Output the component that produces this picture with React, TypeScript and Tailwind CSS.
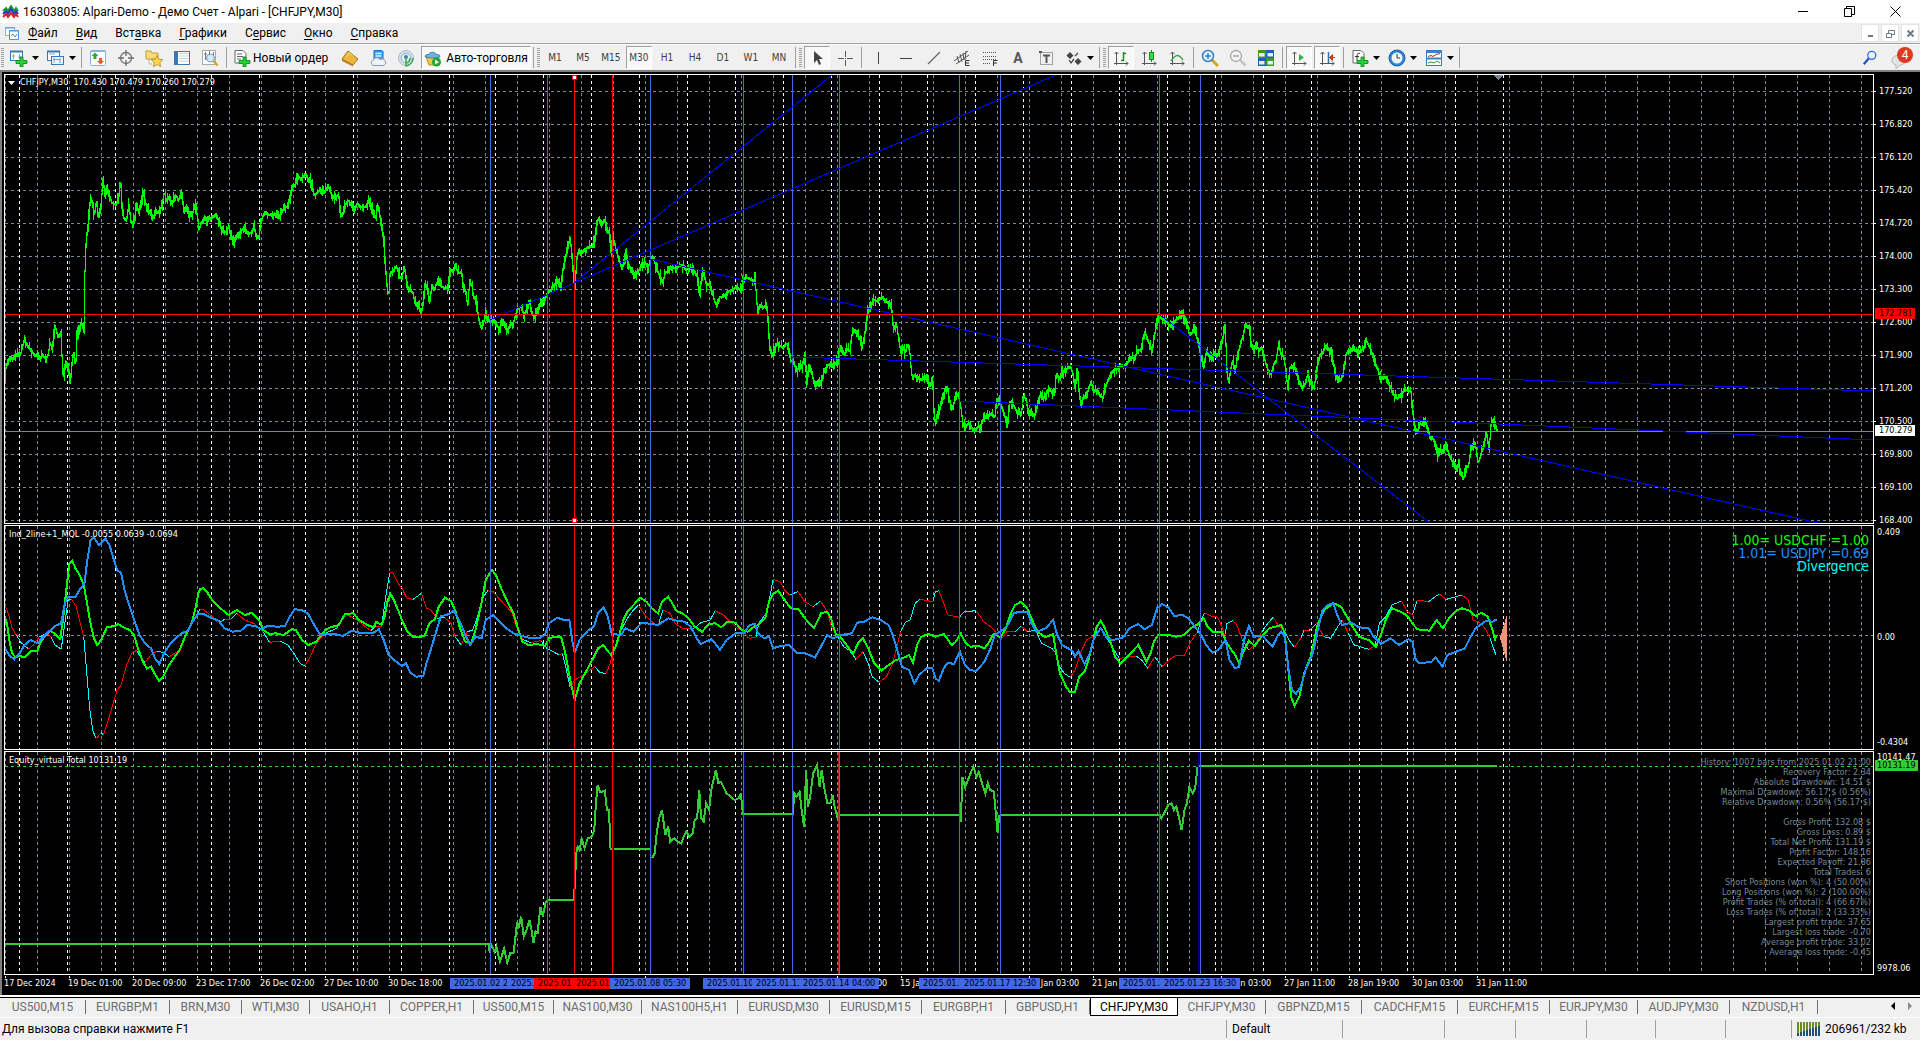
import type { ReactNode } from "react";

type Point = [number, number];
type Chunk = { x: number; k: number; y: number; d: string };

// Every chunk stores raw "x,y" samples: k samples per pixel across, 3 per pixel down.
function unpack(chunks: Chunk[]): Point[] {
  return chunks.flatMap(({ x, k, y, d }) =>
    d.split(" ").map((pair): Point => {
      const [a, b] = pair.split(",").map(Number);
      return [x + a / k, y + b / 3];
    })
  );
}

function toPath(points: Point[]) {
  return "M" + points.map(([x, y]) => `${x.toFixed(1)} ${y.toFixed(1)}`).join("L");
}

const price = unpack([
  {
    x: 0, k: 2.45, y: 70,
    d: "12,925 15,890 22,868 34,866 42,852 50,856 55,830 60,808 66,825 75,840 84,855 92,858 98,866 104,856 112,866 118,855 123,820 128,835 133,785 136,772 142,800 147,798 150,790 152,860 156,925 160,875 166,880 172,940 177,870 181,848 186,880 189,785 194,790 199,755 206,785 208,610 211,520 217,450 222,385 227,400 231,440 237,390 241,450 246,420 250,370 253,315 256,372 262,362 268,375 275,400 285,402 291,385 295,325 299,400 304,445 310,450 316,405 321,455 325,460 331,440 335,400 340,430 346,395 351,365 357,400 363,420 370,435 376,445 383,425 390,430 397,405 403,365 408,395 414,380 420,405 426,385 433,380 438,390 444,368 448,400 451,425 458,420 466,440 472,430 478,405 484,440 488,480 493,460 500,445 508,450 516,445 524,440 530,432 536,455 542,475 548,490 554,485 560,470 566,495 574,518 580,500 586,500 593,480 600,470 606,490 613,490 618,490 622,465 628,500 634,505 638,465 644,440 650,425 658,435 668,435 676,435 683,445 690,425 697,412 705,410 712,375 718,348 724,345 730,318 737,328 745,318 750,312 756,335 760,325 765,350 770,375 778,368 786,358 794,370 800,355 808,355 814,385 822,378 830,375 836,445 842,425 848,400 854,392 860,405 868,420 876,400 882,410 890,412 898,410 905,385 910,405 916,435 921,445 925,400 930,430 935,475 940,500 944,580 948,640 952,685 956,610 962,605 970,590 976,600 980,620 985,628 990,590 995,620 1000,660 1006,660 1012,670 1018,705 1024,700 1028,710 1032,735 1037,695 1042,640 1047,655 1053,695 1058,645 1064,660 1070,640 1075,630 1082,650 1090,655 1098,650 1104,600 1110,605 1115,588 1120,600 1124,610 1131,605 1136,655 1141,665 1146,710 1150,645 1156,645 1160,680 1166,685 1170,720 1175,760 1180,775 1185,760 1190,725 1195,750 1201,755 1210,750 1217,765 1224,780 1230,755 1237,765 1242,785 1250,765 1257,765 1262,740 1268,715 1276,710 1284,735 1290,720 1297,695 1303,725 1309,745 1316,725 1324,700 1330,695 1336,680 1342,670 1350,660 1358,645 1366,635 1375,660 1380,590 1386,560 1391,535 1397,500 1402,570 1408,665 1413,570 1418,540 1424,545 1430,545 1438,535 1446,530 1454,530 1460,480 1466,445 1472,455 1479,455 1483,450 1488,490 1493,485 1497,550 1501,500 1506,520 1512,550 1518,575 1524,595 1530,575 1534,540 1539,580 1547,605 1556,620 1564,600",
  },
  {
    x: 600, k: 2.45, y: 70,
    d: "97,600 104,580 112,580 118,595 124,570 130,560 136,585 142,605 148,620 154,640 160,605 168,605 176,590 184,595 192,590 200,585 208,595 216,595 224,595 232,605 238,620 245,670 250,610 256,620 262,645 269,640 275,665 281,695 287,705 294,680 302,680 310,670 318,662 326,658 334,650 344,660 350,635 358,625 366,625 374,635 380,625 384,690 387,730 392,705 398,710 404,710 408,695 412,760 417,840 422,855 427,835 434,822 442,828 450,832 457,820 462,830 467,875 472,870 478,890 484,905 488,880 494,900 502,850 507,945 511,885 517,900 523,930 530,950 536,930 542,940 549,905 557,885 564,885 570,885 577,880 583,870 588,830 594,850 600,850 606,835 612,845 618,790 623,780 630,795 637,805 642,830 648,800 653,750 658,715 664,705 671,690 680,693 688,685 695,685 702,695 709,700 714,705 718,760 722,780 727,765 732,810 738,850 743,830 748,850 753,825 758,830 762,890 765,920 772,915 780,925 788,930 796,920 803,935 810,945 815,920 819,1045 823,1060 828,1030 834,1010 840,980 846,960 851,950 856,990 863,1015 870,990 877,970 884,1010 890,1065 896,1070 904,1060 912,1075 920,1080 926,1070 933,1070 938,1050 945,1040 952,1040 960,1030 967,1045 973,985 980,1000 987,1020 993,1045 998,1075 1003,995 1010,1000 1017,1015 1024,1030 1032,1035 1038,975 1044,990 1052,1040 1058,1025 1065,1040 1072,1005 1080,970 1087,985 1094,970 1101,955 1108,970 1114,975 1118,905 1125,930 1132,905 1140,905 1147,890 1155,895 1160,920 1165,960 1169,890 1174,970 1179,1010 1184,980 1190,985 1196,960 1203,935 1210,965 1217,960 1225,975 1232,985 1238,955 1245,930 1252,912 1260,900 1270,895 1278,885 1287,890 1294,875 1302,860 1310,870 1317,840 1325,840 1331,800 1336,790 1342,810 1348,825 1352,850 1358,800 1364,760 1370,740 1378,742 1386,750 1394,765 1402,765 1410,750 1418,745 1423,735 1427,720 1431,745 1437,750 1443,790 1450,790 1456,775 1462,800 1468,830 1474,870 1480,880 1486,845 1493,855 1500,870 1507,850 1514,855 1521,825 1527,800 1532,760 1535,880 1540,945 1545,900 1550,870 1556,910 1562,860 1567,830",
  },
  {
    x: 1200, k: 2.175, y: 70,
    d: "90,815 95,790 99,760 104,775 108,765 111,825 117,840 123,815 128,845 134,830 138,850 143,880 148,900 154,915 160,885 166,870 171,820 176,850 182,860 187,900 191,960 196,890 202,890 208,900 214,930 222,955 229,940 235,910 241,940 248,955 255,895 260,855 266,850 272,835 280,835 287,855 293,900 300,935 306,930 312,910 318,850 326,845 334,840 342,845 350,845 356,835 361,810 367,825 373,845 380,880 387,900 393,930 400,920 407,925 414,950 421,975 428,985 436,980 442,965 450,960 459,965 463,1020 467,1065 472,1090 478,1060 484,1065 488,1045 494,1070 500,1100 506,1105 512,1120 518,1160 524,1140 530,1150 534,1120 540,1145 547,1170 553,1180 558,1190 563,1185 568,1210 573,1230 578,1190 584,1190 590,1130 595,1120 600,1130 605,1180 610,1160 616,1130 623,1090 629,1140 633,1065 638,1050 643,1070 646,1080",
  },
]);

const chfLine = unpack([
  {
    x: 0, k: 2.45, y: 520,
    d: "12,292 18,315 24,370 30,400 38,412 48,408 60,412 75,393 92,392 100,365 112,345 124,332 135,342 148,357 155,290 162,215 170,130 177,122 185,145 195,165 205,195 212,240 220,300 230,355 238,375 248,360 262,322 280,318 290,312 302,322 318,330 328,345 338,385 350,425 360,445 370,440 378,460 390,483 400,470 412,440 425,415 440,390 455,345 470,310 480,260 486,220 490,208 497,204 507,215 520,240 540,265 560,285 580,270 600,285 617,278 635,300 645,330 660,342 675,340 695,345 715,328 725,330 740,360 755,375 775,365 797,330 810,322 830,315 845,283 865,280 880,300 900,315 915,322 922,305 935,315 942,290 950,240 957,222 965,240 975,270 985,300 997,332 1012,352 1030,350 1040,348 1052,310 1065,298 1075,260 1090,233 1105,243 1115,270 1127,325 1140,365 1155,368 1165,330 1178,260 1190,180 1205,150 1215,165 1230,210 1245,250 1258,280 1270,330 1280,365 1295,375 1315,372 1335,378 1345,355 1360,350 1375,352 1385,400 1397,480 1408,540 1420,490 1440,445 1455,410 1465,385 1478,375 1490,395 1498,405",
  },
  {
    x: 560, k: 2.45, y: 520,
    d: "128,398 135,385 145,345 155,300 165,275 180,255 197,233 212,245 225,265 240,280 250,245 265,230 275,250 285,272 300,280 315,295 330,320 348,335 365,312 380,310 395,322 410,305 430,308 445,330 460,335 475,320 485,315 503,295 512,245 522,222 535,212 545,230 565,265 585,268 600,295 622,325 640,280 655,275 665,300 675,340 690,355 705,380 718,402 730,370 742,355 755,385 770,430 787,452 800,440 820,422 845,412 855,405 865,428 875,375 885,350 903,342 920,350 940,342 960,375 970,365 982,340 992,365 1005,380 1025,378 1040,385 1052,365 1062,342 1080,352 1092,325 1105,280 1115,255 1130,245 1145,265 1155,295 1170,335 1188,352 1208,342 1215,395 1225,460 1240,500 1250,517 1262,515 1272,470 1285,455 1295,420 1305,370 1315,320 1325,302 1335,325 1350,370 1360,410 1373,430 1390,410 1417,375 1427,400 1437,425 1447,400 1455,365 1465,345 1490,345 1510,350 1530,345 1545,325 1560,315",
  },
  {
    x: 1160, k: 2.06, y: 520,
    d: "78,312 83,305 90,295 98,320 108,335 127,335 140,375 155,405 163,430 172,395 183,362 195,378 210,348 225,325 250,315 257,340 263,430 270,530 277,558 287,530 297,460 310,410 318,360 325,310 340,268 358,250 373,260 385,290 397,320 410,350 430,360 445,380 455,345 465,300 478,265 495,275 508,285 520,310 530,328 555,332 570,300 583,325 595,295 610,272 622,265 638,272 650,288 662,278 675,290 685,330 690,358 694,345",
  },
]);

const jpyLine = unpack([
  {
    x: 0, k: 2.45, y: 520,
    d: "12,385 22,405 35,418 48,400 60,375 75,360 92,370 105,350 122,332 135,318 150,310 158,255 165,232 185,230 195,210 207,190 213,130 222,60 230,52 242,75 258,55 268,75 278,115 287,150 297,160 305,210 315,250 330,305 342,345 355,370 370,385 380,415 390,432 402,400 415,375 430,355 445,340 460,332 472,305 485,282 500,283 515,292 535,302 550,325 570,335 590,332 605,315 625,318 640,328 655,318 680,320 698,318 710,290 722,268 740,270 755,282 770,315 785,345 800,342 820,342 840,348 862,332 880,338 915,338 928,328 940,360 952,405 965,420 985,438 995,430 1005,458 1020,470 1037,468 1045,430 1060,370 1070,330 1080,288 1095,285 1112,272 1125,300 1140,345 1152,375 1165,350 1180,355 1190,300 1208,285 1225,305 1240,325 1258,340 1280,348 1300,355 1320,355 1335,345 1345,310 1365,293 1382,300 1395,300 1402,360 1408,398 1420,360 1440,332 1455,320 1465,280 1478,262 1488,285 1499,342",
  },
  {
    x: 560, k: 2.45, y: 520,
    d: "128,342 150,345 160,325 180,335 200,308 225,312 240,315 265,295 285,302 305,305 320,320 335,355 345,372 370,358 380,370 392,390 408,360 430,340 450,340 465,315 478,312 485,340 500,355 512,350 522,385 540,378 562,375 580,398 600,400 625,412 640,378 655,345 668,355 690,345 715,340 728,308 745,305 765,292 785,300 805,315 815,345 825,385 838,440 855,450 868,490 880,465 898,445 912,445 920,475 928,483 940,445 950,428 965,432 980,395 992,435 1005,450 1020,453 1040,425 1055,385 1065,345 1090,325 1100,310 1112,278 1145,275 1155,310 1168,335 1190,325 1208,300 1217,340 1230,375 1255,392 1262,410 1270,393 1285,432 1298,400 1308,355 1325,325 1340,355 1355,360 1380,352 1395,325 1417,312 1432,328 1450,315 1463,265 1475,252 1490,262 1505,288 1525,285 1540,295 1560,328",
  },
  {
    x: 1160, k: 2.06, y: 520,
    d: "78,330 85,345 95,375 108,398 120,390 135,360 143,420 155,445 163,440 173,360 183,318 193,350 212,348 222,365 232,380 243,345 250,335 257,350 265,450 272,510 280,522 290,500 300,450 315,400 325,330 335,270 345,255 357,250 365,285 375,315 395,308 410,322 430,325 440,350 455,372 475,355 492,375 512,358 520,365 527,420 535,430 560,425 568,412 582,440 592,405 610,395 628,385 640,350 650,325 672,302 685,305 694,298",
  },
]);

const divergence = unpack([
  {
    x: 0, k: 2.45, y: 520,
    d: "12,255 20,280 30,325 40,345 52,368 70,387 82,375 95,352 115,340 125,350 135,375 150,388 160,300 167,240 175,238 187,260 197,310 205,350 212,450 220,570 228,635 236,655 248,638 253,645 263,610 275,560 287,510 297,495 310,435 325,395 335,392 345,412 355,427 370,405 385,393 400,398 415,410 430,398 442,390 455,345 470,305 480,290 490,268 500,270 520,290 535,310 550,298 565,298 580,280 600,300 625,312 645,335 660,367 685,363 705,375 720,400 735,430 747,438 760,410 775,370 797,340 825,325 845,283 865,292 885,310 908,332 922,318 935,318 945,230 955,158 962,158 975,190 985,205 997,235 1012,238 1033,220 1045,265 1055,268 1070,295 1090,293 1105,310 1115,350 1130,375 1145,335 1158,330 1170,290 1182,235 1195,212 1208,215 1222,235 1240,258 1255,280 1265,320 1280,358 1300,368 1325,362 1340,385 1370,405 1378,400 1388,450 1397,505 1408,480 1425,468 1440,455 1457,440 1470,458 1485,460 1495,430 1499,410",
  },
  {
    x: 560, k: 2.45, y: 520,
    d: "128,405 140,375 150,330 165,295 180,270 192,255 205,280 220,300 240,318 252,270 270,280 282,310 300,325 325,328 345,308 368,300 380,272 400,285 415,302 435,325 450,335 462,355 480,352 487,310 508,275 515,225 522,178 540,185 550,210 562,225 583,215 600,245 620,260 638,243 655,275 665,320 680,350 695,380 710,392 725,418 742,395 755,430 765,470 782,487 800,470 815,430 825,380 835,335 845,308 858,300 870,250 882,238 913,245 920,215 928,212 940,250 950,285 978,292 990,275 1020,272 1038,305 1060,325 1080,360 1095,335 1115,335 1130,318 1145,335 1165,330 1180,370 1205,385 1215,400 1222,435 1235,460 1250,472 1262,450 1275,400 1290,360 1305,350 1325,325 1340,355 1352,378 1370,415 1390,412 1412,408 1425,420 1440,445 1457,410 1475,440 1490,422 1510,405 1530,405 1545,365 1560,340",
  },
  {
    x: 1160, k: 2.06, y: 520,
    d: "78,335 83,305 92,278 105,288 118,290 128,320 133,350 138,310 150,302 158,315 170,360 183,390 195,375 210,335 222,310 233,292 243,315 255,330 268,365 277,382 290,355 297,330 307,332 323,310 337,350 352,355 362,330 375,300 388,340 400,375 430,388 443,378 452,310 465,290 478,255 497,243 510,275 520,285 530,240 553,245 575,222 590,238 622,225 635,240 645,300 660,308 672,330 680,355 692,405",
  },
]);

const equity = [
  unpack([
    {
      x: 0, k: 2.45, y: 520,
      d: "12,1272 1197,1272 1200,1300 1203,1272 1212,1295 1216,1280 1225,1325 1235,1285 1243,1328 1250,1300 1258,1300 1264,1240 1267,1205 1271,1220 1277,1190 1283,1250 1290,1230 1297,1200 1303,1235 1307,1270 1312,1235 1317,1240 1324,1160 1330,1190 1336,1150 1342,1140 1405,1140 1408,1100 1412,1000 1415,980 1420,990 1425,955 1432,985 1440,955 1450,950 1456,930 1460,850 1464,795 1470,815 1475,815 1482,812 1487,870 1492,870 1496,990",
    },
  ]),
  unpack([{ x: 560, k: 2.45, y: 520, d: "131,987 220,987" }]),
  unpack([
    {
      x: 560, k: 2.45, y: 520,
      d: "226,1015 232,1000 237,940 243,895 250,870 258,945 265,920 270,965 280,955 288,965 297,970 303,950 310,935 316,950 325,940 330,900 336,895 341,810 346,895 352,905 358,850 365,870 372,800 382,750 388,790 394,785 400,800 408,820 418,830 428,840 438,835 443,820 448,882 570,882 574,820 580,830 587,815 592,870 598,920 603,750 607,860 613,830 620,760 630,735 636,800 641,750 647,800 655,850 662,850 668,825 673,860 680,895 684,885 978,885 982,905 986,770 992,800 998,785 1004,765 1013,740 1020,770 1026,755 1034,790 1042,820 1048,790 1054,810 1063,815 1067,870 1072,940 1076,888 1080,885 1470,885 1473,895 1480,880 1490,855 1498,850 1504,870 1510,860 1516,890 1523,930 1530,870 1536,850 1542,800 1550,820 1556,805 1562,740",
    },
  ]),
  unpack([{ x: 1160, k: 2.06, y: 520, d: "80,738 694,738" }]),
];

// One high-low stroke per pixel column: mostly short wicks, now and then a long one.
function priceBars(points: Point[]) {
  let seed = 7;
  const wick = () => {
    seed = (seed * 16807) % 2147483647;
    return 1 + (seed / 2147483647) ** 3 * 6;
  };
  let i = 0;
  const at = (x: number) => {
    while (i < points.length - 2 && points[i + 1][0] < x) i++;
    const [x0, y0] = points[i];
    const [x1, y1] = points[i + 1];
    const t = Math.min(1, Math.max(0, (x - x0) / (x1 - x0)));
    return y0 + (y1 - y0) * t;
  };
  let d = "";
  let prev = at(5);
  for (let x = 5; x <= 1497; x++) {
    const next = at(x + 1);
    const high = Math.min(prev, next) - wick();
    const low = Math.max(prev, next) + wick();
    d += `M${x + 0.5} ${Math.round(high)}V${Math.round(low)}`;
    prev = next;
  }
  return d;
}

// Cyan while moving away from the zero level, red while coming back to it.
function splitDivergence(points: Point[], zero: number) {
  let cyan = "";
  let red = "";
  for (let i = 1; i < points.length; i++) {
    const a = points[i - 1];
    const b = points[i];
    const seg = `M${a[0].toFixed(1)} ${a[1].toFixed(1)}L${b[0].toFixed(1)} ${b[1].toFixed(1)}`;
    if (Math.abs(b[1] - zero) > Math.abs(a[1] - zero)) cyan += seg;
    else red += seg;
  }
  return { cyan, red };
}

const PLOT_LEFT = 5;
const PLOT_WIDTH = 1868;
const bars = priceBars(price);
const div = splitDivergence(divergence, 635.5);

const gridX = Array.from({ length: 59 }, (_, i) => 5 + i * 32);
const dayX = [
  ...[19, 67, 115, 163, 211, 259, 305, 353, 401, 449, 495, 543, 591],
  ...Array.from({ length: 19 }, (_, i) => 639 + i * 48),
];
const gridY = Array.from({ length: 14 }, (_, i) => 91 + i * 33);

const marks = [
  { x: 490, time: "2025.01.02 21:00", red: false },
  { x: 547, time: "2025.01.06 02:30", red: false },
  { x: 574, time: "2025.01.06 16:00", red: true },
  { x: 612, time: "2025.01.07 11:00", red: true },
  { x: 650, time: "2025.01.08 05:30", red: false },
  { x: 743, time: "2025.01.10 04:30", red: false },
  { x: 792, time: "2025.01.13 04:30", red: false },
  { x: 839, time: "2025.01.14 04:00", red: false },
  { x: 959, time: "2025.01.16 16:00", red: false },
  { x: 1000, time: "2025.01.17 12:30", red: false },
  { x: 1159, time: "2025.01.22 20:00", red: false },
  { x: 1200, time: "2025.01.23 16:30", red: false },
];

const times = [
  { slot: 0, text: "17 Dec 2024" },
  { slot: 1, text: "19 Dec 01:00" },
  { slot: 2, text: "20 Dec 09:00" },
  { slot: 3, text: "23 Dec 17:00" },
  { slot: 4, text: "26 Dec 02:00" },
  { slot: 5, text: "27 Dec 10:00" },
  { slot: 6, text: "30 Dec 18:00" },
  { slot: 10, text: "8 Jan 03:00" },
  { slot: 13, text: "14 Jan 03:00" },
  { slot: 14, text: "15 Jan 11:00" },
  { slot: 16, text: "20 Jan 03:00" },
  { slot: 17, text: "21 Jan 11:00" },
  { slot: 19, text: "24 Jan 03:00" },
  { slot: 20, text: "27 Jan 11:00" },
  { slot: 21, text: "28 Jan 19:00" },
  { slot: 22, text: "30 Jan 03:00" },
  { slot: 23, text: "31 Jan 11:00" },
];

const prices = [
  "177.520", "176.820", "176.120", "175.420", "174.720", "174.000", "173.300",
  "172.600", "171.900", "171.200", "170.500", "169.800", "169.100", "168.400",
];

const stats = [
  "History: 1007 bars from 2025.01.02 21:00",
  "Recovery Factor: 2.34",
  "Absolute Drawdown: 14.51 $",
  "Maximal Drawdown: 56.17 $ (0.56%)",
  "Relative Drawdown: 0.56% (56.17 $)",
  "",
  "Gross Profit: 132.08 $",
  "Gross Loss: 0.89 $",
  "Total Net Profit: 131.19 $",
  "Profit Factor: 148.16",
  "Expected Payoff: 21.86",
  "Total Trades: 6",
  "Short Positions (won %): 4 (50.00%)",
  "Long Positions (won %): 2 (100.00%)",
  "Profit Trades (% of total): 4 (66.67%)",
  "Loss Trades (% of total): 2 (33.33%)",
  "Largest profit trade: 37.65",
  "Largest loss trade: -0.70",
  "Average profit trade: 33.02",
  "Average loss trade: -0.45",
];

const menu = [
  ["", "Ф", "айл"], ["", "В", "ид"], ["Вст", "а", "вка"], ["", "Г", "рафики"],
  ["С", "е", "рвис"], ["", "О", "кно"], ["", "С", "правка"],
];

const frames = ["M1", "M5", "M15", "M30", "H1", "H4", "D1", "W1", "MN"];

const tabs = [
  { name: "US500,M15", w: "w-[86px]" }, { name: "EURGBP,M1", w: "w-[84px]" },
  { name: "BRN,M30", w: "w-[72px]" }, { name: "WTI,M30", w: "w-[68px]" },
  { name: "USAHO,H1", w: "w-[80px]" }, { name: "COPPER,H1", w: "w-[84px]" },
  { name: "US500,M15", w: "w-[80px]" }, { name: "NAS100,M30", w: "w-[88px]" },
  { name: "NAS100H5,H1", w: "w-[96px]" }, { name: "EURUSD,M30", w: "w-[92px]" },
  { name: "EURUSD,M15", w: "w-[92px]" }, { name: "EURGBP,H1", w: "w-[84px]" },
  { name: "GBPUSD,H1", w: "w-[84px]" }, { name: "CHFJPY,M30", w: "w-[88px]", active: true },
  { name: "CHFJPY,M30", w: "w-[88px]" }, { name: "GBPNZD,M15", w: "w-[96px]" },
  { name: "CADCHF,M15", w: "w-[96px]" }, { name: "EURCHF,M15", w: "w-[92px]" },
  { name: "EURJPY,M30", w: "w-[88px]" }, { name: "AUDJPY,M30", w: "w-[92px]" },
  { name: "NZDUSD,H1", w: "w-[88px]" },
];

function Icon({ children, size = 18 }: { children: ReactNode; size?: number }) {
  return (
    <svg viewBox="0 0 18 18" width={size} height={size} fill="none" className="shrink-0" aria-hidden="true">
      {children}
    </svg>
  );
}

function Tool({ label, on, drop, children }: { label: string; on?: boolean; drop?: boolean; children: ReactNode }) {
  return (
    <button
      type="button"
      aria-label={label}
      className={`flex h-6 shrink-0 items-center ${drop ? "w-[37px] pl-[5px]" : "w-7 justify-center"}`}
    >
      <span
        className={`flex h-[23px] items-center justify-center ${
          on ? "w-[26px] border border-r-white border-b-white border-t-[#a0a0a0] border-l-[#a0a0a0] bg-[#f8f8f8]" : ""
        }`}
      >
        {children}
      </span>
      {drop && (
        <svg width="7" height="4" className="ml-1 shrink-0" aria-hidden="true">
          <path d="M0 0h7L3.500 4z" fill="#000" />
        </svg>
      )}
    </button>
  );
}

function Sep() {
  return <span className="mx-[2px] h-[21px] w-px shrink-0 bg-[#a0a0a0]" />;
}

function Grip() {
  return (
    <svg width="3" height="20" className="mx-px shrink-0" aria-hidden="true">
      <path d="M1.500 0V20" stroke="#a0a0a0" strokeWidth="3" strokeDasharray="1 1" />
    </svg>
  );
}

const Plus = () => <path d="M10 8h3v3.500h4v3h-4V18h-3v-3.500H6v-3h4z" fill="#22d43a" stroke="#0a7d18" strokeWidth="0.800" />;
const Axes = () => <path d="M4.500 16V3M2.500 5l2-2 2 2M2 14.500h14M14 12.500l2 2-2 2" stroke="#555" />;

function Toolbar() {
  return (
    <div className="flex h-[26px] shrink-0 items-center overflow-hidden border-t border-white bg-[#f0f0f0]">
      <Grip />
      <Tool label="Новый график" drop>
        <Icon>
          <rect x="0.500" y="2.500" width="12" height="9" fill="#fff" stroke="#3a78b5" />
          <path d="M0 2.500h13" stroke="#3a78b5" strokeWidth="2" />
          <path d="M3.500 5v5M9.500 5v5M2 7h3M8 8h3" stroke="#7fa9cf" />
          <Plus />
        </Icon>
      </Tool>
      <Tool label="Профили" drop>
        <Icon>
          <rect x="0.500" y="2.500" width="12" height="9" fill="#fff" stroke="#3a78b5" />
          <path d="M0 2.500h13" stroke="#3a78b5" strokeWidth="2" />
          <rect x="4.500" y="7.500" width="12" height="8" fill="#eaf3fb" stroke="#3a78b5" />
          <path d="M2 5h6M6 10.500h8M7 8.500v5M13 9v5" stroke="#7fa9cf" />
        </Icon>
      </Tool>
      <Sep />
      <Tool label="Обзор рынка">
        <Icon>
          <rect x="1.500" y="1.500" width="15" height="15" rx="1" fill="#fff" stroke="#86b3dc" />
          <path d="M2 2h14" stroke="#86b3dc" strokeWidth="2" />
          <path d="M6 3.500l3.500 3.500H7.500V10h-3V7H2.500z" fill="#2fa53a" />
          <path d="M11.500 15.500L8 12h2V9h3v3h2z" fill="#e8582a" />
        </Icon>
      </Tool>
      <Tool label="Окно данных">
        <Icon>
          <circle cx="9" cy="9" r="5.500" stroke="#6d6d6d" strokeWidth="1.300" />
          <path d="M9 1v6M9 11v6M1 9h6M11 9h6" stroke="#6d6d6d" strokeWidth="1.300" />
        </Icon>
      </Tool>
      <Tool label="Навигатор">
        <Icon>
          <path d="M1 2h5l1 2h6v6H1z" fill="#f6dd7c" stroke="#c79c27" />
          <path d="M4 11v4h3" stroke="#8a8a8a" strokeDasharray="1 1" />
          <path d="M12 6.500l1.800 3.700 4 .5-3 2.800.8 4L12 15.600 8.400 17.500l.8-4-3-2.800 4-.5z" fill="#ffd84a" stroke="#b5861b" strokeWidth="0.800" />
        </Icon>
      </Tool>
      <Tool label="Терминал">
        <Icon>
          <rect x="1.500" y="2.500" width="15" height="13" fill="#fff" stroke="#3a78b5" />
          <path d="M3.500 3v12" stroke="#3a78b5" strokeWidth="3" />
          <path d="M6 4.500h10M6 7h10M6 9.500h10M6 12h10" stroke="#bcd3e8" />
        </Icon>
      </Tool>
      <Tool label="Тестер стратегий">
        <Icon>
          <rect x="1.500" y="1.500" width="13" height="14" fill="#fff" stroke="#a9a9a9" />
          <path d="M4.500 3v8M8.500 2v5M12.500 3v5M3 5h3" stroke="#777" />
          <circle cx="9.500" cy="9" r="4" fill="#cde5f8" fillOpacity="0.850" stroke="#6e9cc4" />
          <path d="M12.500 12l4 4.500" stroke="#d9a520" strokeWidth="2.500" />
        </Icon>
      </Tool>
      <Sep />
      <button type="button" className="ml-1 flex h-6 shrink-0 items-center gap-[2px] pr-2 text-xs">
        <Icon>
          <path d="M2 1.500h8l3 3V14H2z" fill="#fff" stroke="#666" />
          <path d="M4 5h5M4 7.500h6M4 10h4" stroke="#666" />
          <Plus />
        </Icon>
        Новый ордер
      </button>
      <Tool label="MetaEditor">
        <Icon>
          <path d="M1 10l6-8 10 8-5 6z" fill="#e9b53c" stroke="#a8741a" />
          <path d="M1 10l11 6v1.500L1 12z" fill="#b9801e" />
          <path d="M5 8l3-4 4 3" stroke="#fbe29a" />
        </Icon>
      </Tool>
      <Tool label="Облако">
        <Icon>
          <path d="M5 1.500h8l1 1V11H5z" fill="#3aa0ee" stroke="#1c6db8" />
          <path d="M6.500 4.500h6M6.500 7h6" stroke="#d8efff" strokeWidth="1.500" />
          <path d="M4 16.500a2.800 2.800 0 0 1 0-5.200A4 4 0 0 1 11 10.500a3 3 0 0 1 4 6z" fill="#eef2f8" stroke="#8c9bb2" />
        </Icon>
      </Tool>
      <Tool label="Сигналы">
        <Icon>
          <circle cx="9" cy="9" r="7.500" fill="#d5e0e6" stroke="#a8bccb" />
          <circle cx="9" cy="9" r="4.800" fill="#e4f0e6" stroke="#8fb3c6" />
          <circle cx="9" cy="8" r="2" fill="#3b7dc4" />
          <path d="M9 9v8a8 8 0 0 0 7-8M9 14a5 5 0 0 0 4-5" stroke="#45a35a" strokeWidth="1.500" />
        </Icon>
      </Tool>
      <button
        type="button"
        className="ml-px flex h-[23px] shrink-0 items-center gap-1 border border-t-[#a0a0a0] border-r-white border-b-white border-l-[#a0a0a0] bg-[#f8f8f8] px-[2px] text-xs"
      >
        <Icon>
          <path d="M2 8h13l-2 8H5z" fill="#f0c93f" stroke="#b98d1d" />
          <path d="M1 7.500c0-2 3-2 4-2 0-3 7-3 7 0 2 0 4 0 4 2-3 2-12 2-15 0z" fill="#6db4d8" stroke="#3a83ab" />
          <circle cx="12.500" cy="13" r="4.500" fill="#1fa82e" />
          <path d="M11 10.500v5l4-2.500z" fill="#fff" />
        </Icon>
        Авто-торговля
      </button>
      <Sep />
      <Grip />
      {frames.map((f) => (
        <Tool key={f} label={f} on={f === "M30"}>
          <span className="font-[DejaVu_Sans_Condensed,sans-serif] text-[10px] text-[#404040]">{f}</span>
        </Tool>
      ))}
      <Sep />
      <Grip />
      <Tool label="Курсор" on>
        <Icon>
          <path d="M6 2v12l3-3 2 5 2-1-2-5h4z" fill="#444" />
        </Icon>
      </Tool>
      <Tool label="Перекрестие">
        <Icon>
          <path d="M9.500 2v6M9.500 11v6M2 9.500h6M11 9.500h6M9 9.500h1" stroke="#555" />
        </Icon>
      </Tool>
      <Sep />
      <Tool label="Вертикальная линия">
        <Icon>
          <path d="M9.500 3v12" stroke="#444" />
        </Icon>
      </Tool>
      <Tool label="Горизонтальная линия">
        <Icon>
          <path d="M3 9.500h12" stroke="#444" />
        </Icon>
      </Tool>
      <Tool label="Трендовая линия">
        <Icon>
          <path d="M3 15L15 3" stroke="#666" strokeWidth="1.300" />
        </Icon>
      </Tool>
      <Tool label="Канал">
        <Icon>
          <path d="M1 12L15 2M3 15L16 6M4 7l2 7M7 5l2 8M10 4l1 7M13 2l-1 9" stroke="#555" />
          <path d="M16.500 11.500h-4v5h4M12.500 14h3.500" stroke="#333" />
        </Icon>
      </Tool>
      <Tool label="Фибоначчи">
        <Icon>
          <path d="M2 3.500h14M2 7.500h14M2 10.500h14M2 14.500h8" stroke="#555" strokeDasharray="1 1" />
          <path d="M12.500 17v-5.500h4M12.500 14h3.500" stroke="#333" />
        </Icon>
      </Tool>
      <Tool label="Текст">
        <span className="text-sm font-bold text-[#555]">A</span>
      </Tool>
      <Tool label="Текстовая метка">
        <Icon>
          <rect x="3.500" y="3.500" width="12" height="12" stroke="#555" strokeDasharray="1 1" />
          <path d="M6 6.500h7M9.500 6v8" stroke="#555" strokeWidth="2" />
          <path d="M2 2h3v2H2z" fill="#555" />
        </Icon>
      </Tool>
      <Tool label="Стрелки" drop>
        <Icon>
          <path d="M5 3l3.500 3.500L5 10 1.500 6.500zM13 9l3.500 3.500L13 16l-3.500-3.500z" fill="#444" />
          <path d="M4 11l2 3 3-4M10 7l3-3" stroke="#444" strokeWidth="1.300" />
        </Icon>
      </Tool>
      <Sep />
      <Grip />
      <Tool label="Бары" on>
        <Icon>
          <Axes />
          <path d="M11.500 3v9M9 11.500h2.500M11.500 4.500H14" stroke="#128a1e" strokeWidth="1.500" />
        </Icon>
      </Tool>
      <Tool label="Свечи">
        <Icon>
          <Axes />
          <path d="M11.500 1v12" stroke="#128a1e" />
          <rect x="9.500" y="3.500" width="4" height="7" fill="#2ee04a" stroke="#128a1e" />
        </Icon>
      </Tool>
      <Tool label="Линия">
        <Icon>
          <Axes />
          <path d="M3 12c4-6 7-8 12-1" stroke="#3ba348" strokeWidth="1.500" />
        </Icon>
      </Tool>
      <Sep />
      <Tool label="Увеличить">
        <Icon>
          <path d="M11 11l6 6" stroke="#d9a520" strokeWidth="3" />
          <circle cx="7" cy="7" r="5.500" fill="#e6f4fe" stroke="#2f7fc4" strokeWidth="1.500" />
          <path d="M4 7h6M7 4v6" stroke="#2f7fc4" strokeWidth="1.500" />
        </Icon>
      </Tool>
      <Tool label="Уменьшить">
        <Icon>
          <path d="M11 11l5.500 5.500" stroke="#c4c4c4" strokeWidth="2.500" />
          <circle cx="7" cy="7" r="5.500" fill="#f3f3f3" stroke="#a8a8a8" strokeWidth="1.300" />
          <path d="M4 7h6" stroke="#a8a8a8" strokeWidth="1.500" />
        </Icon>
      </Tool>
      <Tool label="Упорядочить окна">
        <Icon>
          <path d="M1 1h8v8H1zM9 9h8v8H9z" fill="#3f9a1e" />
          <path d="M9 1h8v8H9zM1 9h8v8H1z" fill="#1d5fc4" />
          <path d="M2 4h5.500v3.500H2zM10.500 4H16v3.500h-5.500zM2 12h5.500v3.500H2zM10.500 12H16v3.500h-5.500z" fill="#dff0ff" />
        </Icon>
      </Tool>
      <Sep />
      <Tool label="Автопрокрутка" on>
        <Icon>
          <Axes />
          <path d="M9 5v7l5-3.500z" fill="#35b045" />
        </Icon>
      </Tool>
      <Tool label="Сдвиг графика" on>
        <Icon>
          <Axes />
          <path d="M10.500 3v11" stroke="#2f6fb0" strokeWidth="1.500" />
          <path d="M11.500 8.500l3-3v6zM14 8.500h3" fill="#c43c14" stroke="#c43c14" />
        </Icon>
      </Tool>
      <Sep />
      <Tool label="Индикаторы" drop>
        <Icon>
          <path d="M2 1.500h8l3 3V14H2z" fill="#fff" stroke="#666" />
          <path d="M9 4.500c-3-1-3 1-3 7M4 7.500h4" stroke="#333" />
          <Plus />
        </Icon>
      </Tool>
      <Tool label="Периоды" drop>
        <Icon>
          <circle cx="9" cy="9" r="8" fill="#2c86d8" stroke="#1a5ea6" />
          <circle cx="9" cy="9" r="5.500" fill="#eef6fd" />
          <path d="M9 5v4h3" stroke="#333" />
        </Icon>
      </Tool>
      <Tool label="Шаблоны" drop>
        <Icon>
          <rect x="1.500" y="1.500" width="15" height="15" fill="#fff" stroke="#3a78b5" />
          <path d="M1 3h16M1 9.500h16" stroke="#3a84cc" strokeWidth="2" />
          <path d="M3 7.500l3-1 2 1 3-2 4-1" stroke="#a0341a" />
          <path d="M3 14l3-1 3 1 3-2 3 2" stroke="#2a9a3a" />
        </Icon>
      </Tool>
      <Sep />
      <button type="button" aria-label="Поиск" className="ml-auto flex h-6 w-7 items-center justify-center">
        <Icon size={16}>
          <path d="M2 16l6-7" stroke="#2450b8" strokeWidth="2.500" />
          <circle cx="11" cy="6" r="4.500" fill="#eaf2fe" stroke="#3a6fd8" strokeWidth="1.500" />
        </Icon>
      </button>
      <button type="button" aria-label="Сообщения: 4" className="flex h-6 w-9 items-center justify-center">
        <svg width="24" height="24" fill="none" aria-hidden="true">
          <path d="M2 14a7 5 0 1 1 8 5l-4 4v-4a7 5 0 0 1-4-5z" fill="#e4e4e4" stroke="#b5b5b5" />
          <circle cx="15" cy="9" r="8" fill="#dc3a22" />
          <text x="15" y="13" textAnchor="middle" fill="#fff" className="text-xs">4</text>
        </svg>
      </button>
    </div>
  );
}

// Vertical grid shared by all three panels.
function TimeGrid({ top, bottom }: { top: number; bottom: number }) {
  return (
    <g strokeDasharray="3 3">
      <path d={gridX.map((x) => `M${x + 0.5} ${top}V${bottom}`).join("")} stroke="#778899" />
      <path d={dayX.map((x) => `M${x + 0.5} ${top}V${bottom}`).join("")} stroke="#fff" />
    </g>
  );
}

function Marks({ top, bottom }: { top: number; bottom: number }) {
  return (
    <>
      {marks.map((m) => (
        <path key={m.x} d={`M${m.x + 0.5} ${top}V${bottom}`} stroke={m.red ? "#f00" : "#4169e1"} />
      ))}
    </>
  );
}

function Panel({ top, height, grow, plot, overlay, axis }: {
  top: number;
  height: number;
  grow: string;
  plot: ReactNode;
  overlay: ReactNode;
  axis: ReactNode;
}) {
  return (
    <section className={`flex min-h-0 ${grow}`}>
      <div className="relative min-w-0 flex-1 border border-white">
        <svg
          viewBox={`${PLOT_LEFT} ${top} ${PLOT_WIDTH} ${height}`}
          preserveAspectRatio="none"
          shapeRendering="crispEdges"
          fill="none"
          className="absolute inset-0 h-full w-full"
          aria-hidden="true"
        >
          {plot}
        </svg>
        {overlay}
      </div>
      <div className="relative w-[44px] shrink-0">{axis}</div>
    </section>
  );
}

function Chart() {
  return (
    <main className="flex min-h-0 flex-1 flex-col gap-px border-t-2 border-l-2 border-[#808080] bg-black pt-[2px] pr-[2px] pl-[2px] font-[DejaVu_Sans_Condensed,sans-serif] text-[9px] leading-[11px] text-white">
      <Panel
        top={75}
        height={448}
        grow="flex-[450]"
        plot={
          <>
            <path d={gridY.map((y) => `M5 ${y + 0.5}H1873`).join("")} stroke="#778899" strokeDasharray="3 3" />
            <TimeGrid top={75} bottom={523} />
            <path d="M5 431.500H1873" stroke="#778899" />
            <path d={bars} stroke="#0f0" />
            <Marks top={75} bottom={523} />
            <path d="M490 320L574 283L1056 75M574 283L832 75M650 259L1818 523M792 357L1873 391M960 401L1873 440M1160 315L1430 523" stroke="#00f" />
            <path d="M5 314.500H1873" stroke="#f00" />
            <path d="M572.500 75.500h4v4h-4zM572.500 518.500h4v4h-4z" fill="#fff" stroke="#f00" />
            <path d="M1493 75h10l-5 5z" fill="#778899" />
          </>
        }
        overlay={
          <p className="relative flex items-center gap-[5px] px-[3px] pt-[2px]">
            <svg width="7" height="4" aria-hidden="true">
              <path d="M0 0h7L3.500 4z" fill="#fff" />
            </svg>
            <span className="whitespace-pre">CHFJPY,M30  170.430 170.479 170.260 170.279</span>
          </p>
        }
        axis={
          <>
            <ul className="flex h-[calc(100%+2px)] flex-col justify-between pt-3">
              {prices.map((p) => (
                <li key={p} className="flex items-center gap-[3px]">
                  <span className="h-px w-[2px] bg-white" />
                  {p}
                </li>
              ))}
            </ul>
            <span className="absolute top-[52%] left-px w-[40px] bg-[#f00] pl-1 text-black">172.781</span>
            <span className="absolute top-[78%] left-px w-[40px] bg-white pl-1 text-black">170.279</span>
          </>
        }
      />
      <Panel
        top={526}
        height={223}
        grow="flex-[225]"
        plot={
          <>
            <TimeGrid top={526} bottom={749} />
            <path d="M5 635.500H1873" stroke="#778899" strokeDasharray="3 3" />
            <path d={div.cyan} stroke="#0ff" />
            <path d={div.red} stroke="#f00" />
            <path d={toPath(chfLine)} stroke="#0f0" strokeWidth="2" />
            <path d={toPath(jpyLine)} stroke="#1e90ff" strokeWidth="2" />
            <path d="M1500 638L1507 614V663z" fill="#e9967a" />
            <Marks top={526} bottom={749} />
          </>
        }
        overlay={
          <>
            <p className="relative px-1 pt-[3px]">Ind_2line+1_MQL -0.0055 0.0639 -0.0694</p>
            <div className="absolute top-2 right-1 text-right text-sm leading-[13px]">
              <p className="text-[#0f0]">1.00= USDCHF =1.00</p>
              <p className="text-[#1e90ff]">1.01= USDJPY =0.69</p>
              <p className="text-[#0ff]">Divergence</p>
            </div>
          </>
        }
        axis={
          <ul className="flex h-full flex-col justify-between py-[2px] pl-[3px]">
            <li>0.409</li>
            <li>0.00</li>
            <li>-0.4304</li>
          </ul>
        }
      />
      <Panel
        top={752}
        height={222}
        grow="flex-[224]"
        plot={
          <>
            <TimeGrid top={752} bottom={974} />
            <path d="M5 766.500H1873" stroke="#32cd32" strokeDasharray="3 3" />
            <path d="M613.500 752V974M651.500 752V974M744.500 752V974M1161.500 752V974M1198.500 752V974" stroke="#000080" />
            {equity.map((part, i) => (
              <path key={i} d={toPath(part)} stroke="#32cd32" strokeWidth="2" />
            ))}
            <Marks top={752} bottom={974} />
            <path d="M838.500 752V974" stroke="#b22222" />
          </>
        }
        overlay={
          <>
            <p className="relative px-1 pt-[3px]">Equity_virtual Total 10131.19</p>
            <ul className="absolute top-[5px] right-[2px] text-right leading-[10px] text-[#778899]">
              {stats.map((s, i) => (
                <li key={i} className="h-[10px]">{s}</li>
              ))}
            </ul>
          </>
        }
        axis={
          <>
            <ul className="flex h-full flex-col justify-between py-px pl-[3px]">
              <li>10141.47</li>
              <li>9978.06</li>
            </ul>
            <span className="absolute top-[9px] left-px w-[43px] bg-[#32cd32] pl-[2px] text-black">10131.19</span>
          </>
        }
      />
      <div className="relative mr-[44px] h-[19px] shrink-0">
        {times.map((t) => (
          <span key={t.slot} className="absolute top-0 whitespace-nowrap" style={{ left: `${((t.slot * 64) / 1870) * 100}%` }}>
            <span className="ml-px block h-[2px] w-px bg-white" />
            {t.text}
          </span>
        ))}
        {marks.map((m, i) => (
          <span
            key={m.x}
            className={`absolute top-[2px] overflow-hidden pl-1 whitespace-nowrap text-black ${
              m.red ? "bg-[#f00]" : "bg-[#4169e1]"
            }`}
            style={{
              left: `${((m.x - 44) / 1870) * 100}%`,
              width: Math.min(80, (marks[i + 1]?.x ?? 1873) - m.x),
            }}
          >
            {m.time}
          </span>
        ))}
      </div>
    </main>
  );
}

export default function App() {
  return (
    <div className="flex h-screen flex-col overflow-hidden bg-[#f0f0f0] font-[Roboto,Noto_Sans,sans-serif] text-xs text-black">
      <header className="flex h-[23px] shrink-0 items-center bg-white pl-[2px]">
        <svg width="17" height="14" fill="none" strokeWidth="2" aria-hidden="true">
          <path d="M1 6l3-3 2 3 3-5 3 5 2-3 2 3" stroke="#1c9a2c" />
          <path d="M1 9l3-3 2 3 3-5 3 5 2-3 2 3" stroke="#2438c4" />
          <path d="M1 12l3-3 2 3 3-4 3 4 2-3 2 3" stroke="#e01c1c" />
        </svg>
        <h1 className="ml-1 text-xs">16303805: Alpari-Demo - Демо Счет - Alpari - [CHFJPY,M30]</h1>
        <div className="ml-auto flex pr-[2px]">
          <button type="button" aria-label="Свернуть" className="flex h-5 w-[46px] items-center justify-center">
            <svg width="11" height="11"><path d="M0 5.500h10" stroke="#000" /></svg>
          </button>
          <button type="button" aria-label="Восстановить" className="flex h-5 w-[46px] items-center justify-center">
            <svg width="11" height="11" fill="none"><path d="M.5 2.500h7v8h-7zM2.500 2.500v-2h8v8h-3" stroke="#000" /></svg>
          </button>
          <button type="button" aria-label="Закрыть" className="flex h-5 w-[46px] items-center justify-center">
            <svg width="11" height="11"><path d="M.5.5l10 10M10.500.5l-10 10" stroke="#000" /></svg>
          </button>
        </div>
      </header>
      <nav className="flex h-[21px] shrink-0 items-center gap-[18px] border-b border-[#a0a0a0] pl-1">
        <svg width="16" height="15" fill="none" className="-mr-[10px]" aria-hidden="true">
          <path d="M1.500 1.500h9v8h-9z" fill="#fff" stroke="#86b0e6" />
          <path d="M5.500 4.500h9v9h-9z" fill="#fff" stroke="#5a8fd8" />
          <path d="M1 2h10M5 5h10" stroke="#5a8fd8" />
          <path d="M7 10l2-2 2 3 2-3" stroke="#5a8fd8" />
        </svg>
        {menu.map(([before, key, after]) => (
          <button key={before + key + after} type="button">
            {before}
            <span className="underline underline-offset-2">{key}</span>
            {after}
          </button>
        ))}
        <div className="ml-auto flex gap-[2px] pr-px">
          <button type="button" aria-label="Свернуть окно" className="flex size-[18px] items-center justify-center border border-[#e3e3e3] bg-white">
            <svg width="9" height="9"><path d="M2 7h5" stroke="#6b7b8c" strokeWidth="2" /></svg>
          </button>
          <button type="button" aria-label="Восстановить окно" className="flex size-[18px] items-center justify-center border border-[#e3e3e3] bg-white">
            <svg width="9" height="9" fill="none"><path d="M.5 4.500h5v4h-5zM2.500 4V1.500h6v4H6" stroke="#6b7b8c" /></svg>
          </button>
          <button type="button" aria-label="Закрыть окно" className="flex size-[18px] items-center justify-center border border-[#e3e3e3] bg-white">
            <svg width="9" height="9"><path d="M1.500 1.500l6 6M7.500 1.500l-6 6" stroke="#6b7b8c" strokeWidth="2" /></svg>
          </button>
        </div>
      </nav>
      <Toolbar />
      <Chart />
      <div className="flex h-[23px] shrink-0 flex-col border-b border-white bg-[#f0f0f0]">
        <div className="h-[2px] bg-white" />
        <div className="flex h-5 items-start border-t border-black text-[#6d6d6d]">
          {tabs.map((t, i) =>
            t.active ? (
              <button key={i} type="button" className={`h-[18px] shrink-0 border-x border-b border-black bg-white leading-4 text-black ${t.w}`}>
                {t.name}
              </button>
            ) : (
              <button key={i} type="button" className={`mt-[2px] h-[14px] shrink-0 border-r border-[#6d6d6d] leading-[13px] ${t.w}`}>
                {t.name}
              </button>
            )
          )}
          <div className="mt-1 ml-auto flex gap-3 pr-[7px]">
            <button type="button" aria-label="Назад">
              <svg width="5" height="8"><path d="M4 0v8L0 4z" fill="#000" /></svg>
            </button>
            <button type="button" aria-label="Вперёд">
              <svg width="5" height="8"><path d="M0 0v8l4-4z" fill="#8a8a8a" /></svg>
            </button>
          </div>
        </div>
      </div>
      <footer className="flex h-[22px] shrink-0 items-center [&>*]:h-[18px] [&>*]:leading-[18px]">
        <span className="flex-1 pl-[2px]">Для вызова справки нажмите F1</span>
        <span className="w-[116px] border-l border-[#a0a0a0] pl-[5px]">Default</span>
        <span className="w-[102px] border-l border-[#a0a0a0]" />
        <span className="w-[71px] border-l border-[#a0a0a0]" />
        <span className="w-[71px] border-l border-[#a0a0a0]" />
        <span className="w-[69px] border-l border-[#a0a0a0]" />
        <span className="w-[70px] border-l border-[#a0a0a0]" />
        <span className="w-[66px] border-l border-[#a0a0a0]" />
        <span className="flex w-[129px] items-center gap-1 border-l border-[#a0a0a0] pl-[5px]">
          <svg width="24" height="14" shapeRendering="crispEdges" aria-hidden="true">
            <path d="M1 0v14M4 0v14M7 0v14M10 0v14M13 0v14M16 0v14M19 0v14M22 0v14" stroke="#6b8e23" strokeWidth="2" />
            <path d="M1 11v3M4 10v4M7 9v5M10 8v6M13 7v7M16 6v8M19 5v9M22 4v10" stroke="#1c4f7c" strokeWidth="2" />
          </svg>
          206961/232 kb
        </span>
      </footer>
    </div>
  );
}
